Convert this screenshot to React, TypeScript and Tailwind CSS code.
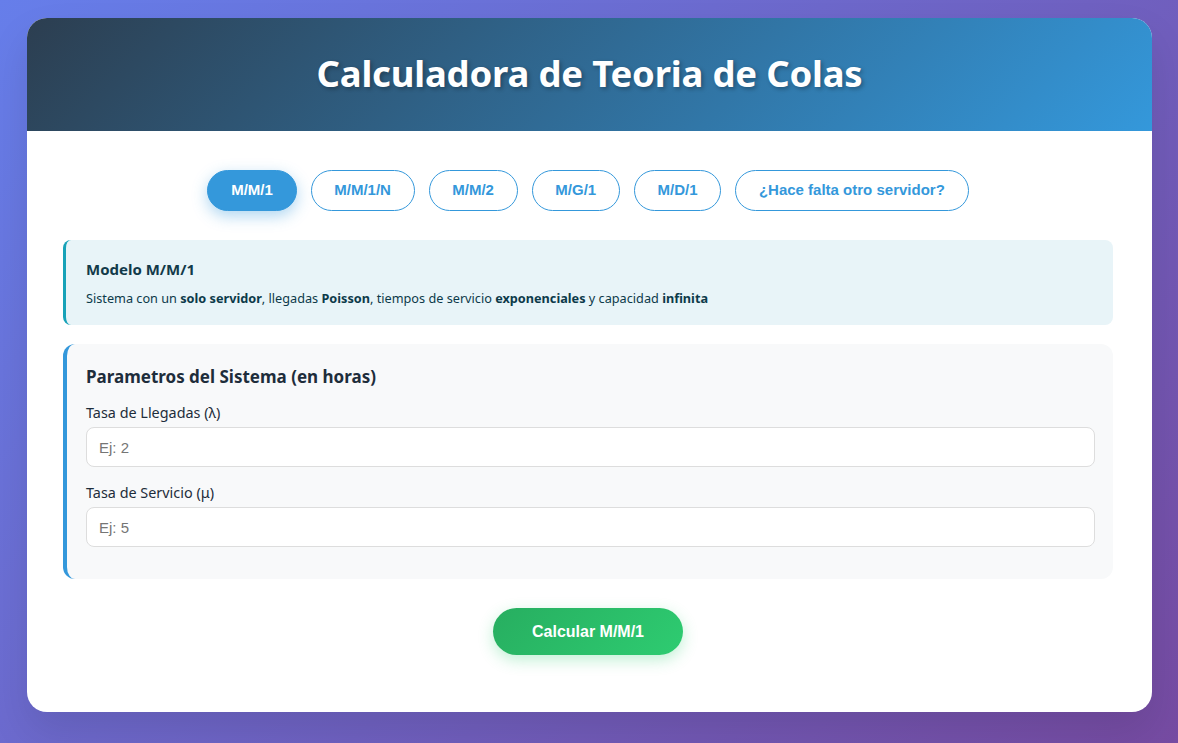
import React from "react";

const tabs = ["M/M/1", "M/M/1/N", "M/M/2", "M/G/1", "M/D/1", "¿Hace falta otro servidor?"];

export default function App() {
  return (
    <div
      className="min-h-[743px] w-full bg-[linear-gradient(135deg,#667eea_0%,#764ba2_100%)] pl-[27px] pr-[26px] pt-[18px] pb-[31px]"
      style={{ fontFamily: '"Noto Sans", "Open Sans", sans-serif' }}
    >
      <div className="overflow-hidden rounded-[20px] bg-white shadow-[0_20px_40px_rgba(0,0,0,0.1)]">
        <div className="flex h-[113px] items-center justify-center bg-[linear-gradient(135deg,#2c3e50_0%,#3498db_100%)]">
          <h1 className="-mt-[3px] text-[36.5px] font-bold tracking-[-0.2px] text-white [text-shadow:2px_2px_4px_rgba(0,0,0,0.3)]">
            Calculadora de Teoria de Colas
          </h1>
        </div>

        <div className="pl-[36px] pr-[39px] pt-[39px] pb-[57px]">
          <div
            className="flex justify-center gap-[14px]"
            style={{ fontFamily: '"Liberation Sans", Arial, sans-serif' }}
          >
            {tabs.map((t, i) => (
              <button
                key={t}
                className={
                  i === 0
                    ? "h-[41px] rounded-full border border-[#3498db] bg-[#3498db] px-[22.7px] text-[15px] font-bold text-white shadow-[0_5px_15px_rgba(52,152,219,0.4)]"
                    : "h-[41px] rounded-full border border-[#3498db] bg-white px-[22.7px] text-[15px] font-bold text-[#3498db]"
                }
              >
                {t}
              </button>
            ))}
          </div>

          <div className="mt-[29px] rounded-[8px] border-l-[3px] border-[#17a2b8] bg-[#e8f4f8] pl-[20px] pr-[20px] pt-[19px] pb-[17px]">
            <h3 className="text-[15px] font-bold leading-[20px] text-[#123a4a]">Modelo M/M/1</h3>
            <p className="mt-[10px] text-[12.7px] leading-[19px] text-[#0c3a4a]">
              Sistema con un <strong>solo servidor</strong>, llegadas <strong>Poisson</strong>, tiempos de
              servicio <strong>exponenciales</strong> y capacidad <strong>infinita</strong>
            </p>
          </div>

          <div className="mt-[19px] rounded-[12px] border-l-[4px] border-[#3498db] bg-[#f8f9fa] pl-[19px] pr-[18px] pt-[21px] pb-[32px]">
            <h3 className="text-[17px] font-bold leading-[24px] text-[#1e2d3b]">
              Parametros del Sistema (en horas)
            </h3>
            <label className="mt-[14px] block text-[14.4px] leading-[20px] text-[#1e2d3b]">
              Tasa de Llegadas (λ)
            </label>
            <input
              placeholder="Ej: 2"
              className="mt-[4px] block h-[40px] w-full rounded-[8px] border border-[#dddddd] bg-white px-[12px] text-[15px] text-[#333] outline-none placeholder:text-[#757575]"
              style={{ fontFamily: '"Liberation Sans", Arial, sans-serif' }}
            />
            <label className="mt-[16px] block text-[14.4px] leading-[20px] text-[#1e2d3b]">
              Tasa de Servicio (μ)
            </label>
            <input
              placeholder="Ej: 5"
              className="mt-[4px] block h-[40px] w-full rounded-[8px] border border-[#dddddd] bg-white px-[12px] text-[15px] text-[#333] outline-none placeholder:text-[#757575]"
              style={{ fontFamily: '"Liberation Sans", Arial, sans-serif' }}
            />
          </div>

          <div className="mt-[29px] flex justify-center">
            <button
              className="h-[47px] w-[190px] rounded-full bg-[linear-gradient(135deg,#27ae60_0%,#2ecc71_100%)] text-[16px] font-bold text-white shadow-[0_5px_15px_rgba(46,204,113,0.3)]"
              style={{ fontFamily: '"Liberation Sans", Arial, sans-serif' }}
            >
              Calcular M/M/1
            </button>
          </div>
        </div>
      </div>
    </div>
  );
}
